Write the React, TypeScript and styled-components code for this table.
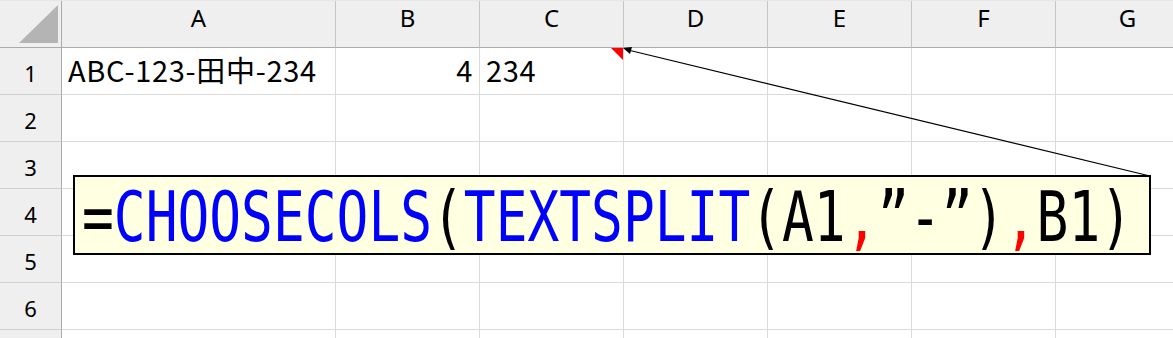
import { createGlobalStyle, styled } from 'styled-components'

const GlobalStyle = createGlobalStyle`
    html, body {
        margin: 0;
        padding: 0;
        background: #ffffff;
        overflow: hidden;
    }
    body {
        font-family: "Noto Sans CJK JP", "Noto Sans", sans-serif;
    }
`

const columns = [
    { name: 'A', width: 274 },
    { name: 'B', width: 144 },
    { name: 'C', width: 144 },
    { name: 'D', width: 144 },
    { name: 'E', width: 144 },
    { name: 'F', width: 144 },
    { name: 'G', width: 144 },
]

const rows = [1, 2, 3, 4, 5, 6, 7]

type CellData = { text: string; align?: 'left' | 'right'; comment?: boolean }

// row 1 is the only one with values
const data: Record<string, CellData> = {
    A1: { text: 'ABC-123-田中-234' },
    B1: { text: '4', align: 'right' },
    C1: { text: '234', comment: true },
}

const formula: { text: string; color: string }[] = [
    { text: '=', color: '#000000' },
    { text: 'CHOOSECOLS', color: '#0000ff' },
    { text: '(', color: '#000000' },
    { text: 'TEXTSPLIT', color: '#0000ff' },
    { text: '(A1', color: '#000000' },
    { text: ',', color: '#ff0000' },
    { text: '”-”)', color: '#000000' },
    { text: ',', color: '#ff0000' },
    { text: 'B1)', color: '#000000' },
]

export default function App() {
    return (
        <>
            <GlobalStyle />
            <Sheet $cols={columns.map((c) => c.width)}>
                <Corner>
                    <svg width="61" height="46" viewBox="0 0 61 46">
                        <polygon points="19,42 58,4 58,42" fill="#b4b4b4" />
                    </svg>
                </Corner>
                {columns.map((c) => (
                    <ColHeader key={c.name}>{c.name}</ColHeader>
                ))}
                {rows.map((r) => (
                    <Row key={r}>
                        <RowHeader>{r}</RowHeader>
                        {columns.map((c) => {
                            const cell = data[`${c.name}${r}`]
                            return (
                                <Cell key={c.name} $align={cell?.align ?? 'left'}>
                                    {cell?.text}
                                    {cell?.comment && <CommentMark />}
                                </Cell>
                            )
                        })}
                    </Row>
                ))}

                <Arrow width="1173" height="338" viewBox="0 0 1173 338">
                    <line x1="1150" y1="176" x2="628" y2="50" stroke="#000" strokeWidth="1.2" />
                    <polygon points="623,48 632,47 630,54" fill="#000" />
                </Arrow>

                <CommentBox>
                    <FormulaText>
                        {formula.map((t, i) => (
                            <Token key={i} $color={t.color}>{t.text}</Token>
                        ))}
                    </FormulaText>
                </CommentBox>
            </Sheet>
        </>
    )
}

const Sheet = styled.div<{ $cols: number[] }>`
    position: relative;
    display: grid;
    grid-template-columns: 62px ${(p) => p.$cols.map((w) => `${w}px`).join(' ')};
    grid-template-rows: 47px;
    grid-auto-rows: 47px;
    width: 1173px;
    height: 338px;
    overflow: hidden;
    border-top: 1px solid #e3e8ee;
    box-sizing: border-box;
`

const Row = styled.div`
    display: contents;
`

const Corner = styled.div`
    background: #efefef;
    border-right: 1px solid #ababab;
    border-bottom: 1px solid #ababab;
    box-sizing: border-box;
    svg {
        display: block;
    }
`

const ColHeader = styled.div`
    background: #efefef;
    border-right: 1px solid #c4c4c4;
    border-bottom: 1px solid #ababab;
    box-sizing: border-box;
    text-align: center;
    font-family: "Noto Sans", sans-serif;
    font-size: 24px;
    line-height: normal;
    color: #000;
`

const RowHeader = styled.div`
    background: #efefef;
    border-right: 1px solid #ababab;
    border-bottom: 1px solid #cfcfcf;
    box-sizing: border-box;
    text-align: center;
    font-family: "Noto Sans", sans-serif;
    font-size: 22px;
    line-height: normal;
    padding-top: 10px;
    color: #000;
`

const Cell = styled.div<{ $align: 'left' | 'right' }>`
    position: relative;
    border-right: 1px solid #dadada;
    border-bottom: 1px solid #dadada;
    box-sizing: border-box;
    padding: 0 6px;
    text-align: ${(p) => p.$align};
    font-size: 29px;
    line-height: normal;
    letter-spacing: 0.7px;
    white-space: nowrap;
    color: #000;
`

const CommentMark = styled.span`
    position: absolute;
    top: 0;
    right: 0;
    width: 0;
    height: 0;
    border-top: 12px solid #ff0000;
    border-left: 12px solid transparent;
`

const Arrow = styled.svg`
    position: absolute;
    left: 0;
    top: -1px;
    pointer-events: none;
`

const CommentBox = styled.div`
    position: absolute;
    left: 73px;
    top: 174px;
    width: 1078px;
    height: 80px;
    box-sizing: border-box;
    border: 2px solid #000;
    background: #ffffe1;
    padding-left: 7px;
    overflow: visible;
`

const FormulaText = styled.span`
    display: inline-block;
    font-family: "DejaVu Sans Mono", "Liberation Mono", monospace;
    font-size: 70px;
    line-height: 81px;
    white-space: nowrap;
    transform: scaleX(0.755);
    transform-origin: 0 50%;
`

const Token = styled.span<{ $color: string }>`
    color: ${(p) => p.$color};
`
